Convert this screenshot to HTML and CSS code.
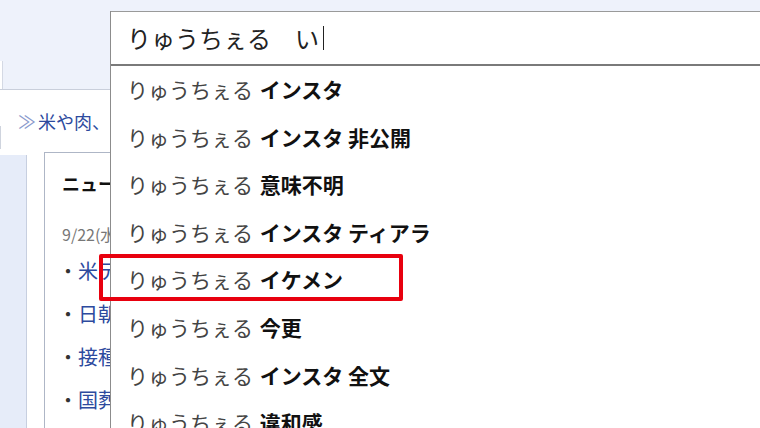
FILE: index.html
```html
<!DOCTYPE html>
<html lang="ja">
<head>
    <meta charset="UTF-8">
    <meta name="viewport" content="width=device-width, initial-scale=1.0">
    <title>検索候補</title>
    <link rel="stylesheet" href="styles.css">
</head>
<body>
    <div class="page">
        <div class="topbar">
            <div class="tab"></div>
        </div>
        <div class="under">
            <div class="crumb">
                <div class="tab2"></div>
                <a href="#"><span class="arrow">≫</span>米や肉、</a>
            </div>
            <div class="main">
                <div class="side"></div>
                <div class="news">
                    <h2>ニュース</h2>
                    <p class="date">9/22(水)</p>
                    <ul>
                        <li><a href="#">米テ</a></li>
                        <li><a href="#">日朝</a></li>
                        <li><a href="#">接種</a></li>
                        <li><a href="#">国葬</a></li>
                    </ul>
                </div>
            </div>
        </div>
    </div>

    <div class="search">
        <div class="input">りゅうちぇる　い<span class="caret"></span></div>
        <ul class="suggest">
            <li>りゅうちぇる <b>インスタ</b></li>
            <li>りゅうちぇる <b>インスタ 非公開</b></li>
            <li>りゅうちぇる <b>意味不明</b></li>
            <li>りゅうちぇる <b>インスタ ティアラ</b></li>
            <li>りゅうちぇる <b>イケメン</b></li>
            <li>りゅうちぇる <b>今更</b></li>
            <li>りゅうちぇる <b>インスタ 全文</b></li>
            <li>りゅうちぇる <b>違和感</b></li>
        </ul>
    </div>
    <div class="mark"></div>
</body>
</html>
```

FILE: styles.css
```css
body {
    margin: 0;
    width: 760px;
    height: 428px;
    overflow: hidden;
    position: relative;
    background: white;
    font-family: "Noto Sans CJK JP", "Noto Sans", sans-serif;
}
.topbar {
    height: 89px;
    background: #eef2fb;
    border-bottom: 1px solid #c9cfdb;
    display: flex;
    align-items: flex-end;
}
.tab {
    width: 2px;
    height: 28px;
    background: white;
    border-right: 1px solid #d4d9e4;
}
/* only the strip left of the search box shows */
.under {
    width: 110px;
    overflow: hidden;
}
.crumb {
    height: 62px;
    display: flex;
    align-items: center;
}
.tab2 {
    width: 2px;
    height: 22px;
    margin-top: 32px;
    border-right: 1px solid #cfd4de;
    border-top: 1px solid #cfd4de;
}
.crumb a {
    margin-left: 17px;
    color: #2d4a9e;
    font-size: 18px;
    text-decoration: none;
    white-space: nowrap;
}
.arrow {
    color: #8a9acc;
    margin-right: 2px;
}
.main {
    display: flex;
    gap: 17px;
    height: 280px;
}
.side {
    width: 26px;
    flex: none;
    margin-top: 3px;
    background: #e6ecf9;
    border-right: 1px solid #c7cfe0;
}
.news {
    flex: none;
    width: 300px;
    border-left: 1px solid #aeb6c6;
    border-top: 1px solid #aeb6c6;
    padding: 17px 17px;
}
.news h2 {
    margin: 0;
    font-size: 18px;
    line-height: 26px;
    color: #111;
}
.date {
    margin: 27px 0 0;
    font-size: 16px;
    line-height: 22px;
    color: #777;
}
.news ul {
    list-style: none;
    margin: 4px 0 0;
    padding: 0;
}
.news li {
    font-size: 20px;
    line-height: 43px;
    white-space: nowrap;
}
.news li::before {
    content: "・";
    color: #333;
    margin-left: -4px;
}
.news li a {
    color: #2d4a9e;
    text-decoration: none;
}

/* search box with suggestions, laid over the page */
.search {
    position: absolute;
    left: 110px;
    top: 11px;
    right: 0;
    bottom: 0;
    background: white;
    border-left: 1px solid #8c8c8c;
}
.input {
    height: 52px;
    border-top: 1px solid #9a9a9a;
    border-bottom: 2px solid #7a7a7a;
    padding-left: 16px;
    font-size: 24px;
    line-height: 52px;
    color: #222;
    display: flex;
    align-items: center;
}
.caret {
    width: 1px;
    height: 24px;
    margin-left: 4px;
    background: #222;
}
.suggest {
    list-style: none;
    margin: 0;
    padding: 0;
}
.suggest li {
    height: 47.6px;
    line-height: 47.6px;
    padding-left: 16px;
    font-size: 21px;
    color: #444;
    white-space: nowrap;
}
.suggest b {
    color: #111;
    margin-left: 2px;
}
.mark {
    position: absolute;
    left: 99px;
    top: 254px;
    width: 296px;
    height: 39px;
    border: 4px solid #e8000e;
    border-radius: 2px;
}
```
